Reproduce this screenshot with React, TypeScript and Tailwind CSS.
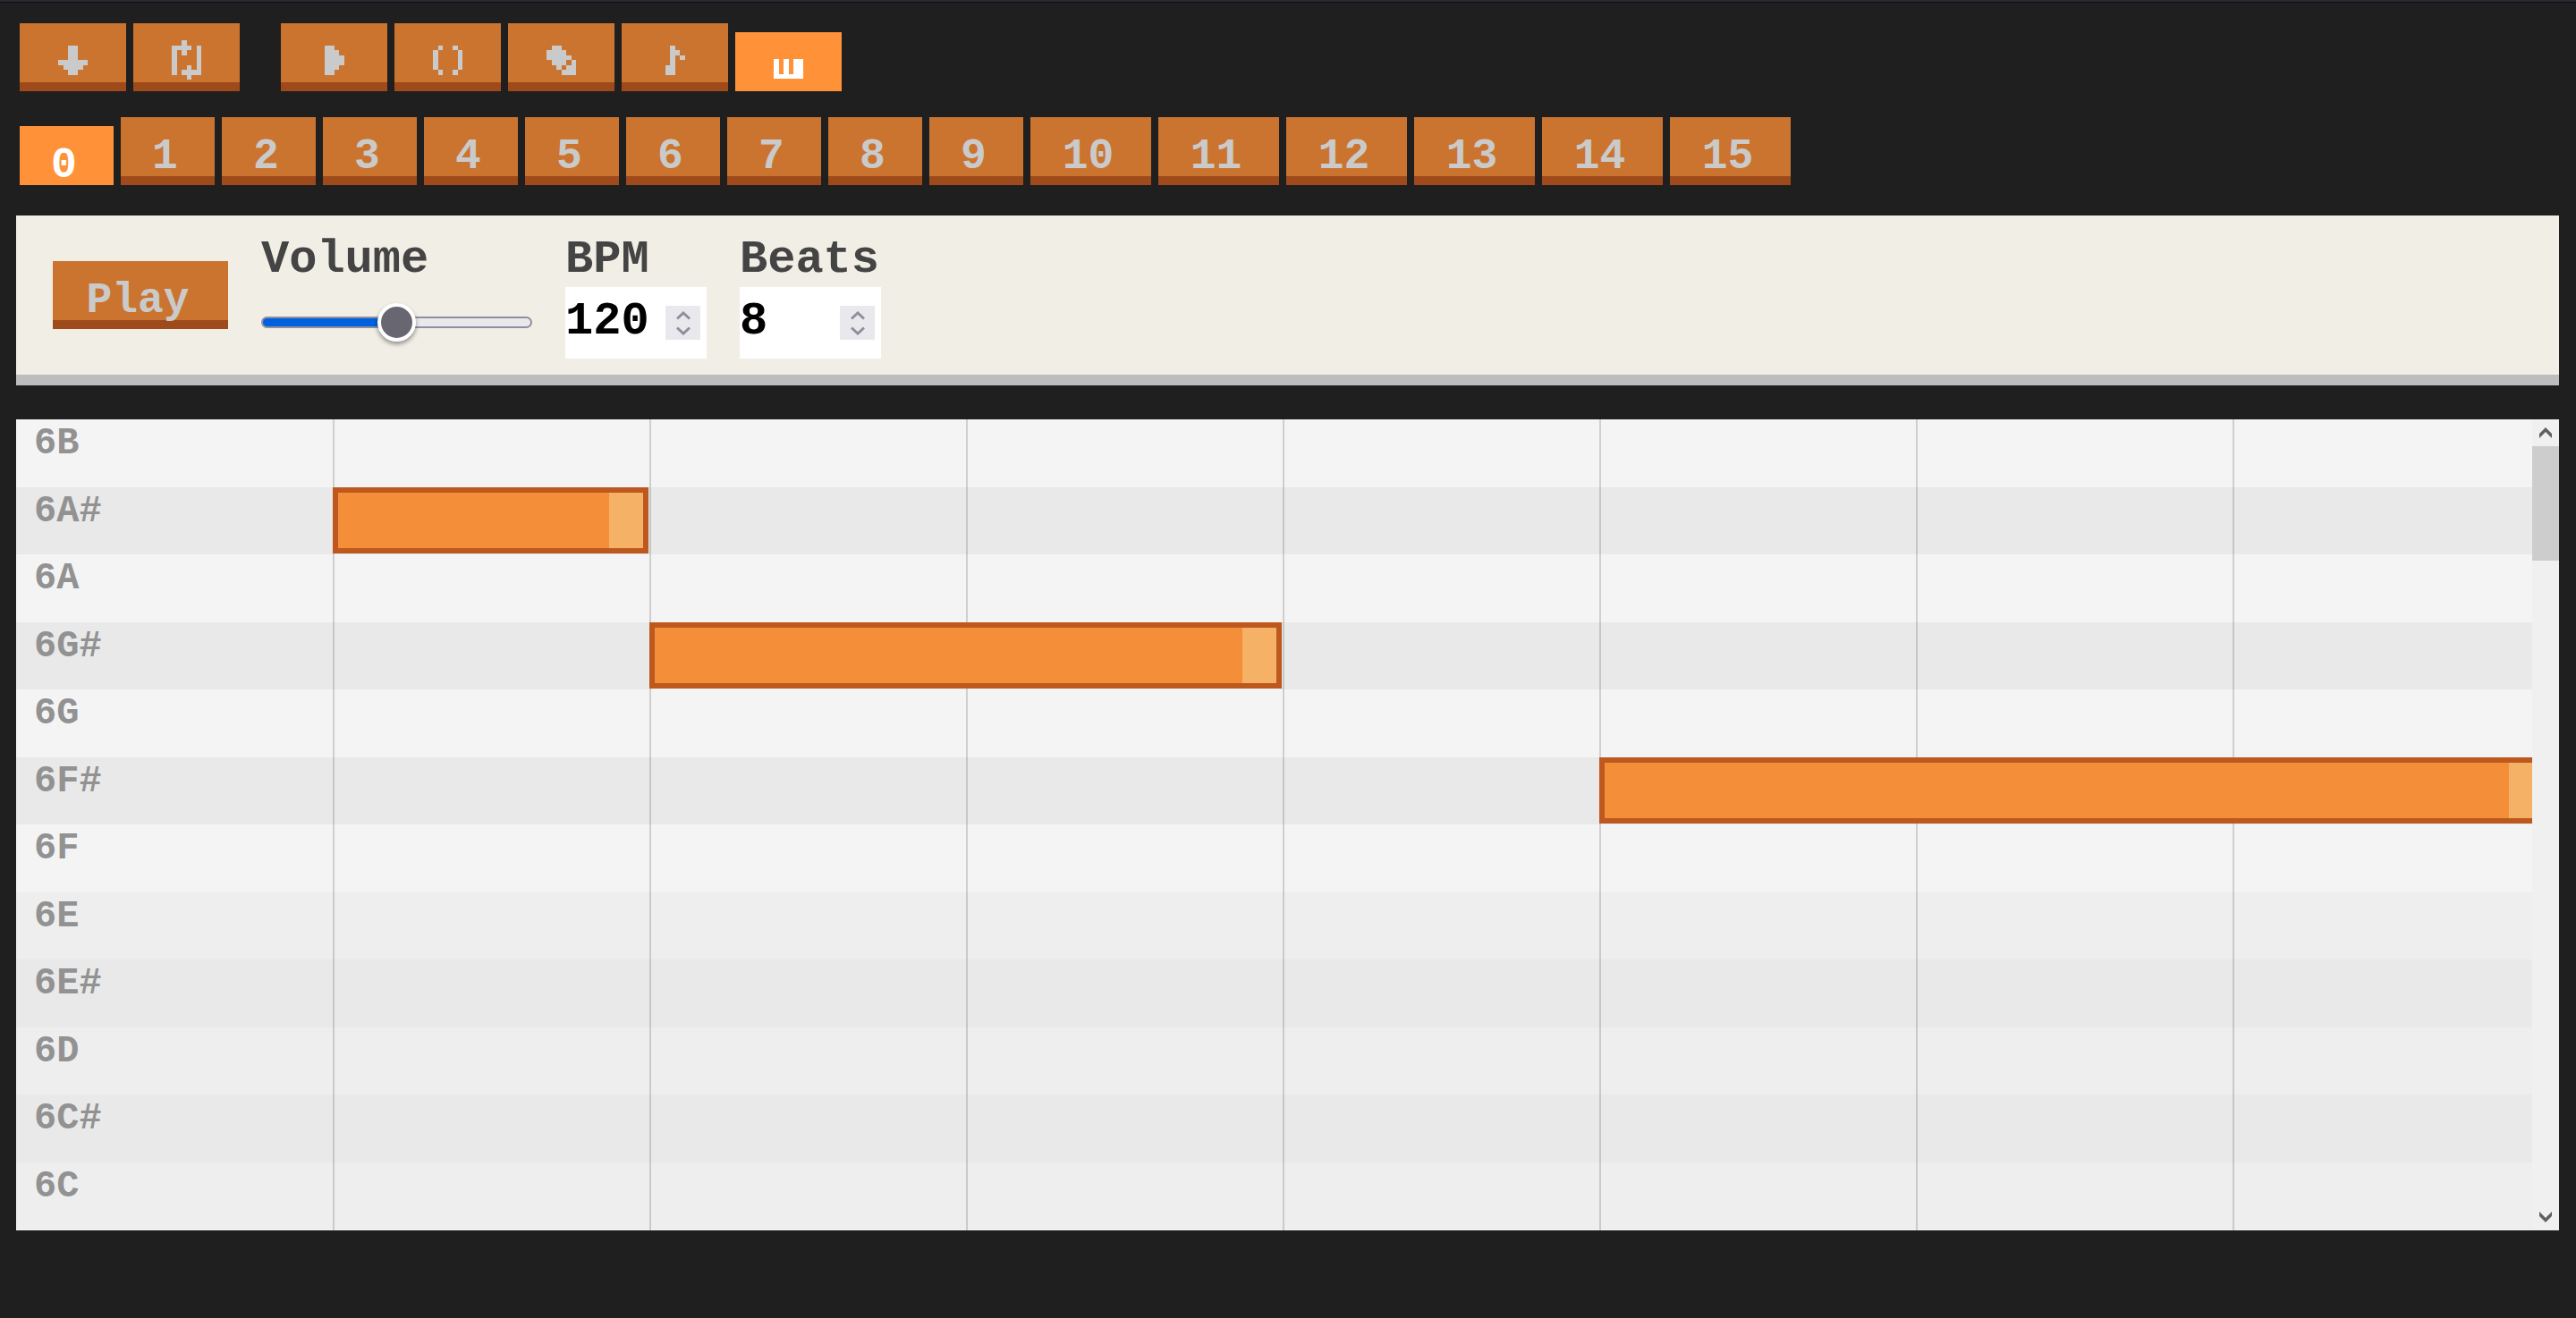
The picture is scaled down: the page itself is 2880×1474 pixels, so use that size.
import { useState } from "react";

type Icon = { name: string; path: string; active?: boolean };

const fileIcons: Icon[] = [
  { name: "Download", path: "M2 1h2v3h2v1h-1v1h-1v1h-2v-1h-1v-1h-1v-1h2z" },
  {
    name: "Loop",
    path: "M0 1h2v-1h1v1h1v1h-1v1h-1v-1h-1v5h-1z M5 1h1v6h-2v1h-1v-1h-1v-1h1v-1h1v1h1z",
  },
];

const toolIcons: Icon[] = [
  { name: "Run", path: "M1 1h2v1h1v1h1v2h-1v1h-1v1h-2z" },
  {
    name: "Code",
    path: "M1 1h1v1h-1z M0 2h1v4h-1z M1 6h1v1h-1z M4 1h1v1h-1z M5 2h1v4h-1z M4 6h1v1h-1z",
  },
  {
    name: "Sprites",
    path: "M1 1h2v1h1v1h1v1h-1v1h-1v1h-1v-1h-1v-1h-1v-2h1z M5 4h1v3h-3v-1h1v-1h1z",
  },
  { name: "Sound", path: "M2 1h1v1h1v1h-1v4h-2v-2h1z M4 3h1v1h-1z" },
  { name: "Piano roll", path: "M0 2h1v3h1v-3h1v3h1v-3h2v4h-6z", active: true },
];

const tracks = Array.from({ length: 16 }, (_, i) => i);

const beatLines = [1, 2, 3, 4, 5, 6, 7];

const rows = [
  { name: "6B", tone: "bg-[#f4f4f4]" },
  { name: "6A#", tone: "bg-[#e9e9e9]", start: 1, length: 1 },
  { name: "6A", tone: "bg-[#f4f4f4]" },
  { name: "6G#", tone: "bg-[#e9e9e9]", start: 2, length: 2 },
  { name: "6G", tone: "bg-[#f4f4f4]" },
  { name: "6F#", tone: "bg-[#e9e9e9]", start: 5, length: 3 },
  { name: "6F", tone: "bg-[#f4f4f4]" },
  { name: "6E", tone: "bg-[#eeeeee]" },
  { name: "6E#", tone: "bg-[#e9e9e9]" },
  { name: "6D", tone: "bg-[#eeeeee]" },
  { name: "6C#", tone: "bg-[#e9e9e9]" },
  { name: "6C", tone: "bg-[#eeeeee]" },
];

/* One beat as a share of the visible roll; the eighth runs a little past the edge. */
const BEAT = 12.585;

const idle = "h-[76px] border-b-[10px] border-[#9f4a1b] bg-[#cb742f] text-[#cacaca]";
const pressed = "mt-[10px] h-[66px] bg-[#ff9239] text-white";

function IconButton({ icon }: { icon: Icon }) {
  return (
    <button
      type="button"
      aria-label={icon.name}
      className={`flex w-[119px] justify-center pt-[19px] ${icon.active ? pressed : idle}`}
    >
      <svg viewBox="0 0 6 8" width="33" height="44" fill="currentColor" shapeRendering="crispEdges">
        <path d={icon.path} />
      </svg>
    </button>
  );
}

function Chevron({ down = false }: { down?: boolean }) {
  return (
    <svg
      viewBox="0 0 16 10"
      width="16"
      height="10"
      fill="none"
      stroke="#8f8f9d"
      strokeWidth="3"
      className={down ? "rotate-180" : ""}
    >
      <path d="M1 8.5 8 2l7 6.5" />
    </svg>
  );
}

function NumberField({ id, label, initial }: { id: string; label: string; initial: number }) {
  const [value, setValue] = useState(initial);
  return (
    <div className="flex w-[158px] flex-col">
      <label htmlFor={id} className="h-[60px] text-[52px] leading-[60px] font-bold text-[#444444]">
        {label}
      </label>
      <div className="flex h-[80px] items-center bg-white pr-[7px]">
        <input
          id={id}
          type="text"
          inputMode="numeric"
          value={value}
          onChange={(e) => setValue(Number(e.target.value) || 0)}
          className="h-[72px] w-full min-w-0 flex-1 bg-transparent pb-[4px] text-[52px] leading-[64px] font-bold text-black outline-none"
        />
        <div className="flex h-[38px] w-[39px] shrink-0 flex-col bg-[#e9e9ed]">
          <button
            type="button"
            aria-label={`Increase ${label}`}
            onClick={() => setValue(value + 1)}
            className="flex flex-1 items-center justify-center pt-[2px]"
          >
            <Chevron />
          </button>
          <button
            type="button"
            aria-label={`Decrease ${label}`}
            onClick={() => setValue(value - 1)}
            className="flex flex-1 items-center justify-center pb-[2px]"
          >
            <Chevron down />
          </button>
        </div>
      </div>
    </div>
  );
}

function ScrollArrow({ down = false }: { down?: boolean }) {
  return (
    <button
      type="button"
      aria-label={down ? "Scroll down" : "Scroll up"}
      className="flex h-[30px] w-[30px] shrink-0 items-center justify-center"
    >
      <svg viewBox="0 0 14 12" width="14" height="12" fill="#606060" className={down ? "rotate-180" : ""}>
        <path d="M7 0l7 7v5l-7-7-7 7V7z" />
      </svg>
    </button>
  );
}

export default function App() {
  const [track, setTrack] = useState(0);
  const [volume, setVolume] = useState(50);

  return (
    <div className="flex min-h-screen flex-col border-t-2 border-[#2b2a33] bg-[#1f1f1f] pb-[98px] font-['Liberation_Mono',monospace]">
      <div className="h-px shrink-0 bg-[#0f0f0f]" />

      <nav aria-label="Tools" className="mt-[23px] flex items-start gap-2 px-[22px]">
        {fileIcons.map((icon) => (
          <IconButton key={icon.name} icon={icon} />
        ))}
        <div className="w-[30px]" />
        {toolIcons.map((icon) => (
          <IconButton key={icon.name} icon={icon} />
        ))}
      </nav>

      <nav aria-label="Tracks" className="mt-[29px] flex items-start gap-2 px-[22px]">
        {tracks.map((n) => (
          <button
            key={n}
            type="button"
            aria-pressed={track === n}
            onClick={() => setTrack(n)}
            className={`pt-[22px] pr-[6px] text-[48px] leading-[44px] font-bold ${n > 9 ? "w-[135px]" : "w-[105px]"} ${
              track === n ? pressed : idle
            }`}
          >
            {n}
          </button>
        ))}
      </nav>

      <section
        aria-label="Playback"
        className="mr-[19px] ml-[18px] mt-[34px] flex items-start gap-[37px] border-b-[12px] border-[#bdbdbd] bg-[#f1eee6] px-[41px] pt-[20px] pb-[18px]"
      >
        <button
          type="button"
          className={`mt-[31px] w-[196px] pt-[22px] pr-[6px] text-[48px] leading-[44px] font-bold ${idle}`}
        >
          Play
        </button>
        <div className="flex w-[303px] flex-col">
          <label htmlFor="volume" className="h-[60px] text-[52px] leading-[60px] font-bold text-[#444444]">
            Volume
          </label>
          <div className="grid h-[78px] items-center">
            <div className="col-start-1 row-start-1 flex h-[13px] overflow-hidden rounded-full border-2 border-[#8f8f9d] bg-[#e9e9ed]">
              <div className="-m-[2px] rounded-l-full border-2 border-[#0250bb] bg-[#0060df]" style={{ width: `${volume}%` }} />
            </div>
            <input
              id="volume"
              type="range"
              min={0}
              max={100}
              value={volume}
              onChange={(e) => setVolume(Number(e.target.value))}
              className="col-start-1 row-start-1 h-[43px] w-full appearance-none bg-transparent [&::-webkit-slider-thumb]:size-[43px] [&::-webkit-slider-thumb]:appearance-none [&::-webkit-slider-thumb]:rounded-full [&::-webkit-slider-thumb]:border-4 [&::-webkit-slider-thumb]:border-white [&::-webkit-slider-thumb]:bg-[#676671] [&::-webkit-slider-thumb]:shadow-[0_3px_5px_rgba(0,0,0,0.4)]"
            />
          </div>
        </div>
        <NumberField id="bpm" label="BPM" initial={120} />
        <NumberField id="beats" label="Beats" initial={8} />
      </section>

      <section aria-label="Notes" className="mr-[19px] ml-[18px] mt-[38px] flex flex-1 bg-[#f4f4f4]">
        <div className="relative grid min-w-0 flex-1 auto-rows-fr overflow-hidden pb-px">
          {rows.map((row) => (
            <div key={row.name} className={row.tone}>
              <span className="block pl-[20px] text-[42px] leading-[54px] font-bold text-[#929292]">{row.name}</span>
            </div>
          ))}
          {beatLines.map((beat) => (
            <div
              key={beat}
              className="absolute inset-y-0 w-[2px] bg-black/15"
              style={{ left: `${beat * BEAT}%` }}
            />
          ))}
          <div className="absolute inset-x-0 top-0 bottom-px grid auto-rows-fr">
            {rows.map((row) => (
              <div key={row.name} className="relative">
                {row.start !== undefined && (
                  <div
                    className="absolute top-0 bottom-px border-r border-transparent"
                    style={{ left: `${row.start * BEAT}%`, width: `${row.length * BEAT}%` }}
                  >
                    <div className="flex h-full justify-end border-[6px] border-[#bd581f] bg-[#f58e38]">
                      <div className="w-[38px] bg-[#f5b166]" />
                    </div>
                  </div>
                )}
              </div>
            ))}
          </div>
        </div>
        <div className="flex w-[30px] shrink-0 flex-col bg-[#f0f0f0]">
          <ScrollArrow />
          <div className="flex-1">
            <div className="h-[128px] bg-[#cdcdcd]" />
          </div>
          <ScrollArrow down />
        </div>
      </section>
    </div>
  );
}
